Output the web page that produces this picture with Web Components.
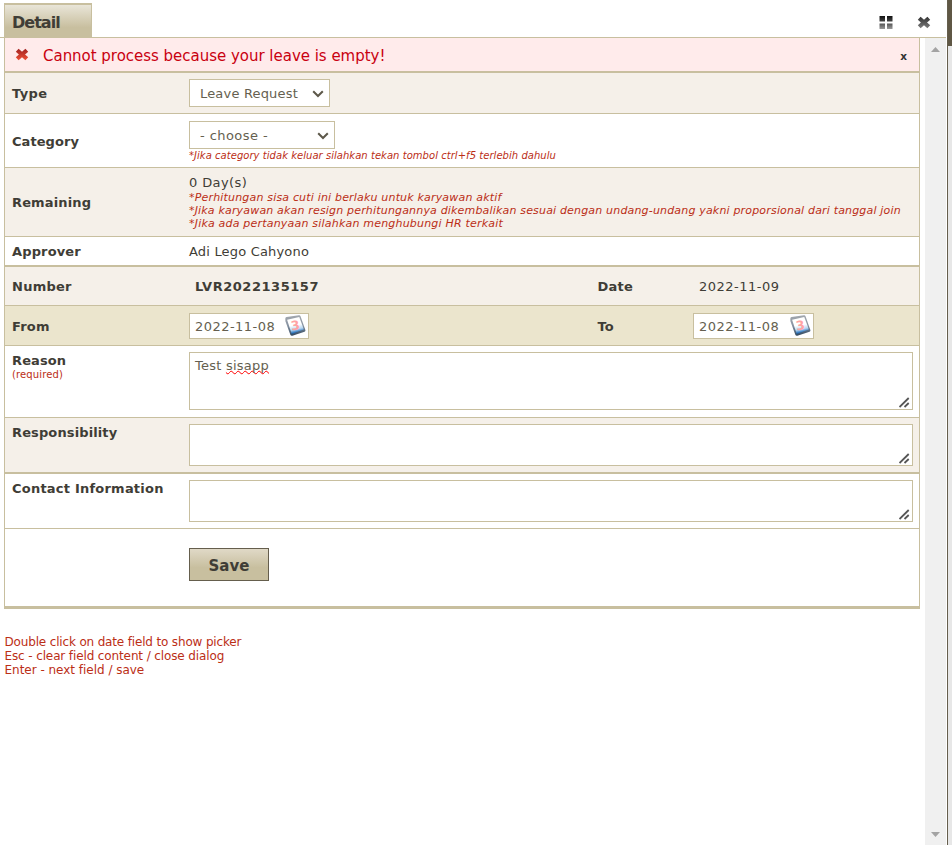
<!DOCTYPE html>
<html lang="id">
<head>
<meta charset="utf-8">
<title>Detail</title>
<style>
html,body{height:100%;margin:0}
body{overflow:hidden;background:#fff;font:13px/15px "DejaVu Sans",Verdana,sans-serif;color:#3f3d36}
.num{letter-spacing:.5px}
</style>
</head>
<body>
<leave-dialog>
  <detail-header slot="header">Detail</detail-header>
  <error-banner>Cannot process because your leave is empty!</error-banner>
  <form-row label="Type" style="--h:40px;--bg:#f5f0e9;--ls:.4px"><pick-list style="--w:141px;--ls:.18px">Leave Request</pick-list></form-row>
  <form-row label="Category" style="--h:53px;--ls:.07px;--shift:2px;--drop:2px"><pick-list style="--w:146px;--ls:.43px">- choose -</pick-list><hint-text style="--size:10px;--ls:.04px">*Jika category tidak keluar silahkan tekan tombol ctrl+f5 terlebih dahulu</hint-text></form-row>
  <form-row label="Remaining" style="--h:68px;--bg:#f5f0e9;--ls:.14px;--cls:.4px;--shift:1px">0 Day(s)<hint-text style="--ls:.18px;margin-top:1px">*Perhitungan sisa cuti ini berlaku untuk karyawan aktif</hint-text><hint-text style="--ls:.175px">*Jika karyawan akan resign perhitungannya dikembalikan sesuai dengan undang-undang yakni proporsional dari tanggal join</hint-text><hint-text style="--ls:.2px">*Jika ada pertanyaan silahkan menghubungi HR terkait</hint-text></form-row>
  <form-row label="Approver" style="--h:28px;--line:2px;--ls:.14px;--cls:.18px">Adi Lego Cahyono</form-row>
  <form-row label="Number" style="--h:38px;--bg:#f5f0e9;--ls:.25px;--inset:6px"><b style="letter-spacing:.54px">LVR2022135157</b><pair-cell slot="pair" label="Date"><span class="num" style="padding-left:6px">2022-11-09</span></pair-cell></form-row>
  <form-row label="From" style="--h:39px;--bg:#ebe5cd;--ls:.2px;--shift:1px"><date-field style="--w:120px">2022-11-08</date-field><pair-cell slot="pair" label="To" style="--lower:2px"><date-field style="--w:121px">2022-11-08</date-field></pair-cell></form-row>
  <form-row label="Reason" note="(required)" top style="--h:71px;--ls:.12px"><text-box style="--h:58px">Test <span style="text-decoration:underline wavy #f00 1px;text-decoration-skip-ink:none;text-underline-offset:0">sisapp</span></text-box></form-row>
  <form-row label="Responsibility" top style="--h:54px;--bg:#f5f0e9;--line:2px;--ls:.12px"><text-box style="--h:42px"></text-box></form-row>
  <form-row label="Contact Information" top style="--h:54px;--ls:.22px"><text-box style="--h:42px"></text-box></form-row>
  <form-row label="" style="--h:77px;--line:3px"><save-button>Save</save-button></form-row>
  <key-hints slot="hints"><div>Double click on date field to show picker</div><div style="letter-spacing:-.12px">Esc - clear field content / close dialog</div><div style="letter-spacing:-.02px">Enter - next field / save</div></key-hints>
</leave-dialog>
<script>
function define(name, html, setup) {
  const template = document.createElement('template');
  template.innerHTML = html;
  customElements.define(name, class extends HTMLElement {
    constructor() {
      super();
      this.attachShadow({mode: 'open'}).append(template.content.cloneNode(true));
    }
    connectedCallback() { if (setup) setup(this, this.shadowRoot); }
  });
}

define('scroll-rail', `<style>
:host{display:flex;flex-direction:column;justify-content:space-between;align-items:center;width:21px;background:#f0f0f0;box-sizing:border-box;padding:9px 0 8px}
svg{display:block}
</style><svg width="9" height="5"><path d="M4.5 0L9 5H0Z" fill="#a3a3a3"/></svg><svg width="9" height="5"><path d="M0 0H9L4.5 5Z" fill="#a3a3a3"/></svg>`);

define('leave-dialog', `<style>
:host{display:flex;height:845px;width:952px}
.main{width:946px;display:flex;flex-direction:column}
.body{flex:1;display:flex;justify-content:space-between}
.content{width:916px;margin-left:4px}
.panel{border:solid #c8bf9f;border-width:0 1px}
.edge{width:1px;background:#655e4d;margin-left:1px}
.page{flex:1;background:linear-gradient(#5f5745 0 46px,#e7e7e7 46px)}
</style>
<div class="main"><slot name="header"></slot><div class="body"><div class="content"><div class="panel"><slot></slot></div><slot name="hints"></slot></div><scroll-rail></scroll-rail></div></div>
<div class="edge"></div><div class="page"></div>`);

define('detail-header', `<style>
:host{display:flex;justify-content:space-between;height:38px;box-sizing:border-box;border-bottom:1px solid #c8bf9f}
.tab{margin:3px 0 0 4px;width:88px;height:34px;box-sizing:border-box;border:1px solid #c8bf9f;border-top-width:2px;border-bottom:0;padding:0 7px;background:linear-gradient(#e9e5d8,#c8bf9f 70%);font:bold 16px/35px "DejaVu Sans",sans-serif;letter-spacing:-.97px;color:#3f3d36}
.tools{display:flex;gap:24px;padding:16px 15px 0 0}
svg{display:block}
</style><div class="tab"><slot></slot></div>
<div class="tools"><svg width="14" height="13"><defs><linearGradient id="g" x2="0" y2="1"><stop stop-color="#111"/><stop offset="1" stop-color="#444"/></linearGradient><linearGradient id="l" x2="0" y2="1"><stop stop-color="#555"/><stop offset="1" stop-color="#999"/></linearGradient></defs><rect x=".5" width="5.5" height="5.5" fill="url(#g)"/><rect x="8" width="5.5" height="5.5" fill="url(#g)"/><rect x=".5" y="7.5" width="5.5" height="5.5" fill="url(#l)"/><rect x="8" y="7.5" width="5.5" height="5.5" fill="url(#l)"/></svg>
<svg width="14" height="13" viewBox="0 0 14 13"><defs><linearGradient id="c" gradientUnits="userSpaceOnUse" x1="0" y1="0" x2="0" y2="13"><stop stop-color="#2d2d2d"/><stop offset="1" stop-color="#808080"/></linearGradient></defs><path d="M2.2 2.2L11.8 10.8M11.8 2.2L2.2 10.8" stroke="url(#c)" stroke-width="4.2"/></svg></div>`);

define('error-banner', `<style>
:host{display:flex;align-items:center;height:33px;border-bottom:2px solid #c8bf9f;background:#ffebeb;color:#c90010;font-size:15px;letter-spacing:-.02px;padding:0 12px 0 10px}
.msg{margin-left:14px;flex:1;padding-top:3px}
b{font:bold 10.5px/15px "DejaVu Sans",sans-serif;color:#333;padding-top:3px}
</style><svg width="14" height="13" viewBox="0 0 14 13"><defs><linearGradient id="r" gradientUnits="userSpaceOnUse" x1="0" y1="0" x2="0" y2="13"><stop stop-color="#9c2020"/><stop offset="1" stop-color="#f25236"/></linearGradient></defs><path d="M2.2 2.2L11.8 10.8M11.8 2.2L2.2 10.8" stroke="url(#r)" stroke-width="4.2"/></svg><span class="msg"><slot></slot></span><b>x</b>`);

define('form-row', `<style>
:host{display:flex;align-items:center;height:var(--h);background:var(--bg,#fff);border-bottom:var(--line,1px) solid #c8bf9f}
:host([top]){align-items:flex-start}
.label{width:177px;padding-left:7px;font-weight:bold;letter-spacing:var(--ls);padding-top:var(--shift,0)}
:host([top]) .label{padding-top:7px}
.note{font-weight:normal;font-size:10px;line-height:13px;letter-spacing:.13px;color:#bb2e16}
.note:empty{display:none}
.field{flex:1;letter-spacing:var(--cls,0);padding-left:var(--inset,0);padding-top:var(--drop,0)}
:host([top]) .field{padding-top:6px}
</style><div class="label"><div class="text"></div><div class="note"></div></div><div class="field"><slot></slot></div><slot name="pair"></slot>`, (el, root) => {
  root.querySelector('.text').textContent = el.getAttribute('label');
  root.querySelector('.note').textContent = el.getAttribute('note') || '';
});

define('pair-cell', `<style>
:host{display:flex;align-items:center;width:322px}
b{width:95.5px;padding-left:.5px;letter-spacing:.2px;padding-top:var(--lower,0)}
</style><b></b><slot></slot>`, (el, root) => { root.querySelector('b').textContent = el.getAttribute('label'); });

define('pick-list', `<style>
:host{display:flex;align-items:center;justify-content:space-between;box-sizing:border-box;width:var(--w);height:28px;border:1px solid #c8bf9f;background:#fff;padding:1px 5px 0 10px;color:#655f50;letter-spacing:var(--ls)}
svg{display:block}
</style><slot></slot><svg width="12" height="8"><path d="M1.2 1.2L6 6L10.8 1.2" fill="none" stroke="#5d584a" stroke-width="2"/></svg>`);

define('hint-text', `<style>
:host{display:block;font-size:var(--size,11px);line-height:13px;font-style:italic;letter-spacing:var(--ls);color:#bb2e16;white-space:nowrap}
</style><slot></slot>`);

define('date-field', `<style>
:host{display:flex;align-items:center;justify-content:space-between;box-sizing:border-box;width:var(--w);height:26px;border:1px solid #c8bf9f;background:#fff;padding:0 2px 0 5px;color:#655f50;letter-spacing:.46px}
.t{padding-top:1px}
svg{display:block;margin-bottom:1px}
</style><span class="t"><slot></slot></span><svg width="21" height="21" viewBox="0 0 20 20"><defs><linearGradient id="p" x2=".2" y2="1"><stop offset=".55" stop-color="#fff"/><stop offset=".8" stop-color="#b7d7f2"/><stop offset="1" stop-color="#1665b4"/></linearGradient><linearGradient id="f" x2="0" y2="1"><stop stop-color="#a3a8ae"/><stop offset=".5" stop-color="#8793a2"/><stop offset="1" stop-color="#31485f"/></linearGradient></defs>
<path d="M.3 3.5Q.3 2.2 1.5 2L13.2.2Q14.4 0 14.8 1.2L19.4 14.2Q19.8 15.4 18.6 16L7 19.7Q5.6 20 5.1 18.8L.4 6Z" fill="url(#f)"/><path d="M2 4.6L13.6 1.9L18 13.9L6.4 18Z" fill="url(#p)"/><text x="5.6" y="14" font-family="DejaVu Sans" font-size="12" font-weight="bold" fill="#ffa3a3" letter-spacing="0" transform="rotate(-10 10 10)">3</text></svg>`);

define('text-box', `<style>
:host{display:flex;justify-content:space-between;box-sizing:border-box;width:724px;height:var(--h);border:1px solid #c8bf9f;background:#fff;padding:5px 2px 1px 5px;color:#655f50;letter-spacing:.24px}
svg{align-self:flex-end;display:block}
</style><span><slot></slot></span><svg width="11" height="11"><path d="M.5 10L9.7 1M5.5 10L9.7 6" stroke="#555" stroke-width="1.8"/></svg>`);

define('save-button', `<style>
:host{display:flex;align-items:center;justify-content:center;box-sizing:border-box;width:80px;height:33px;margin-bottom:6px;padding-top:3px;border:1px solid #655e4d;background:linear-gradient(#e0d9c7,#c8bf9f 60%);font-weight:bold;font-size:15px;letter-spacing:.03px;color:#3f3d36}
</style><slot></slot>`);

define('key-hints', `<style>
:host{display:block;margin:26px 0 0 .5px;font-size:12px;line-height:14px;letter-spacing:-.16px;color:#bb2e16}
</style><slot></slot>`);
</script>
</body>
</html>
